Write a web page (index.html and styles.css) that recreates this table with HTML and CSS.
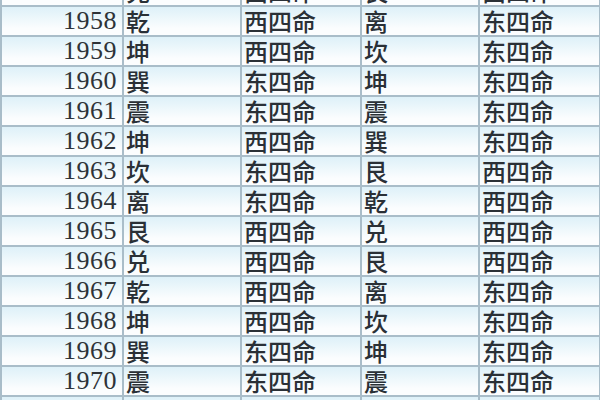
FILE: index.html
```html
<!DOCTYPE html>
<html lang="zh">
<head>
<meta charset="utf-8">
<link rel="stylesheet" href="styles.css">
</head>
<body>
<div class="frame">
<table class="ming">
<colgroup><col class="c-year"><col class="c-gua"><col class="c-ming"><col class="c-gua2"><col class="c-ming2"></colgroup>
<tbody>
<tr><td class="year">1957</td><td>兑</td><td>西四命</td><td>艮</td><td>西四命</td></tr>
<tr><td class="year">1958</td><td>乾</td><td>西四命</td><td>离</td><td>东四命</td></tr>
<tr><td class="year">1959</td><td>坤</td><td>西四命</td><td>坎</td><td>东四命</td></tr>
<tr><td class="year">1960</td><td>巽</td><td>东四命</td><td>坤</td><td>东四命</td></tr>
<tr><td class="year">1961</td><td>震</td><td>东四命</td><td>震</td><td>东四命</td></tr>
<tr><td class="year">1962</td><td>坤</td><td>西四命</td><td>巽</td><td>东四命</td></tr>
<tr><td class="year">1963</td><td>坎</td><td>东四命</td><td>艮</td><td>西四命</td></tr>
<tr><td class="year">1964</td><td>离</td><td>东四命</td><td>乾</td><td>西四命</td></tr>
<tr><td class="year">1965</td><td>艮</td><td>西四命</td><td>兑</td><td>西四命</td></tr>
<tr><td class="year">1966</td><td>兑</td><td>西四命</td><td>艮</td><td>西四命</td></tr>
<tr><td class="year">1967</td><td>乾</td><td>西四命</td><td>离</td><td>东四命</td></tr>
<tr><td class="year">1968</td><td>坤</td><td>西四命</td><td>坎</td><td>东四命</td></tr>
<tr><td class="year">1969</td><td>巽</td><td>东四命</td><td>坤</td><td>东四命</td></tr>
<tr><td class="year">1970</td><td>震</td><td>东四命</td><td>震</td><td>东四命</td></tr>
<tr><td class="year">1971</td><td>坤</td><td>西四命</td><td>巽</td><td>东四命</td></tr>
</tbody>
</table>
</div>
</body>
</html>
```
FILE: styles.css
```css
html, body {
  margin: 0;
  padding: 0;
  background: #f4fafd;
}
.frame {
  width: 600px;
  height: 400px;
  overflow: hidden;
}
.ming {
  margin-top: -25px;
  border-collapse: collapse;
  table-layout: fixed;
  width: 599px;
  font-family: "Noto Sans CJK SC", "Liberation Sans", sans-serif;
  font-size: 24px;
  font-weight: 500;
  color: #2a3036;
}
.c-year { width: 122px; }
.c-gua { width: 118px; }
.c-ming { width: 120px; }
.c-gua2 { width: 118px; }
.c-ming2 { width: 121px; }
.ming tr {
  height: 30px;
  background: linear-gradient(#dcf0f8, #fbfdfe 75%);
}
.ming td {
  border: 2px solid #a9bdc9;
  padding: 0 0 0 2px;
  height: 26px;
  line-height: 26px;
  white-space: nowrap;
  overflow: hidden;
}
.ming td.year {
  font-family: "Liberation Serif", serif;
  font-size: 26px;
  font-weight: 400;
  letter-spacing: 0.5px;
  text-align: right;
  padding: 0 5px 0 0;
  color: #2e3338;
}
```
